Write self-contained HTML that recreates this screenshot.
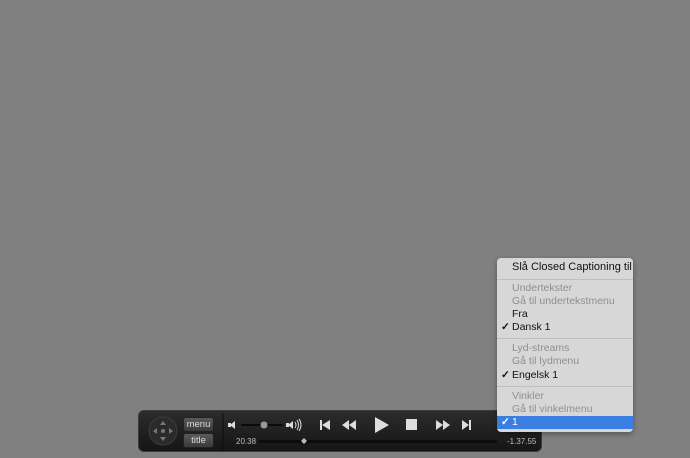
<!DOCTYPE html>
<html><head><style>
body{margin:0;width:690px;height:458px;background:#808080;position:relative;overflow:hidden;font-family:"Liberation Sans",sans-serif}
.bar{position:absolute;left:138px;top:410px;width:404px;height:42px;border-radius:6px;background:linear-gradient(#2c2c2c,#151515);border:1px solid #3a3a3a;box-sizing:border-box}
.btn{position:absolute;left:44px;width:31px;height:15px;border-radius:3px;background:linear-gradient(#5a5a5a,#3a3a3a);border:1px solid #222;color:#ddd;font-size:9.5px;text-align:center;line-height:13px;box-sizing:border-box}
.t{position:absolute;color:#bbb;font-size:8px}
.menu{position:absolute;left:497px;top:258px;width:136px;height:174px;background:#d7d7d7;border-radius:4px;box-shadow:0 2px 6px rgba(0,0,0,.35);font-size:10.5px}
.i{position:absolute;left:15px;color:#111;white-space:nowrap}
.g{color:#8f8f8f}
.ck{position:absolute;left:-11px;font-weight:bold}
.sep{position:absolute;left:0;right:0;height:1px;background:#bfbfbf}
</style></head><body>
<div class="bar">
 <svg width="404" height="42" style="position:absolute;left:0;top:0">
  <circle cx="24" cy="20" r="14" fill="#2a2a2a" stroke="#3c3c3c"/>
  <g fill="#777"><polygon points="24,10 21,14 27,14"/><polygon points="24,30 21,26 27,26"/><polygon points="14,20 18,17 18,23"/><polygon points="34,20 30,17 30,23"/><circle cx="24" cy="20" r="2"/></g>
  <line x1="84" y1="2" x2="84" y2="40" stroke="#0c0c0c"/>
  <g fill="#ddd"><rect x="89" y="12" width="3" height="4"/><polygon points="91,14 96,10 96,18"/>
  <rect x="147" y="12" width="3" height="4"/><polygon points="149,14 154,10 154,18"/></g>
  <g fill="none" stroke="#ddd" stroke-width="1"><path d="M156 11q2 3 0 6M158 9q3 5 0 10M160 8q4 6 0 12"/></g>
  <rect x="102" y="13" width="42" height="2" rx="1" fill="#0a0a0a"/>
  <circle cx="125" cy="14" r="3.5" fill="#999"/>
  <g fill="#ddd">
   <rect x="181" y="9" width="2" height="10"/><polygon points="183,14 191,9 191,19"/>
   <polygon points="203,14 210,9 210,19"/><polygon points="210,14 217,9 217,19"/>
   <polygon points="236,6 236,22 250,14"/>
   <rect x="267" y="8" width="11" height="11"/>
   <polygon points="297,9 304,14 297,19"/><polygon points="304,9 311,14 304,19"/>
   <polygon points="323,9 330,14 323,19"/><rect x="330" y="9" width="2" height="10"/>
  </g>
  <rect x="120" y="29" width="238" height="3" rx="1.5" fill="#0c0c0c"/>
  <polygon points="165,27 168,30 165,33 162,30" fill="#bbb"/>
 </svg>
 <div class="btn" style="top:6px">menu</div>
 <div class="btn" style="top:22px">title</div>
 <div class="t" style="left:97px;top:26px">20.38</div>
 <div class="t" style="left:368px;top:26px">-1.37.55</div>
</div>
<div class="menu">
 <div class="i" style="top:3px;font-size:11px">Slå Closed Captioning til</div>
 <div class="sep" style="top:21px"></div>
 <div class="i g" style="top:24px">Undertekster</div>
 <div class="i g" style="top:37px">Gå til undertekstmenu</div>
 <div class="i" style="top:50px">Fra</div>
 <div class="i" style="top:63px"><span class="ck">✓</span>Dansk 1</div>
 <div class="sep" style="top:80px"></div>
 <div class="i g" style="top:84px">Lyd-streams</div>
 <div class="i g" style="top:97px">Gå til lydmenu</div>
 <div class="i" style="top:111px"><span class="ck">✓</span>Engelsk 1</div>
 <div class="sep" style="top:128px"></div>
 <div class="i g" style="top:132px">Vinkler</div>
 <div class="i g" style="top:145px">Gå til vinkelmenu</div>
 <div style="position:absolute;left:0;right:0;top:158px;height:13px;background:#3b7ee2"></div>
 <div class="i" style="top:158px;color:#fff"><span class="ck">✓</span>1</div>
</div>
</body></html>
